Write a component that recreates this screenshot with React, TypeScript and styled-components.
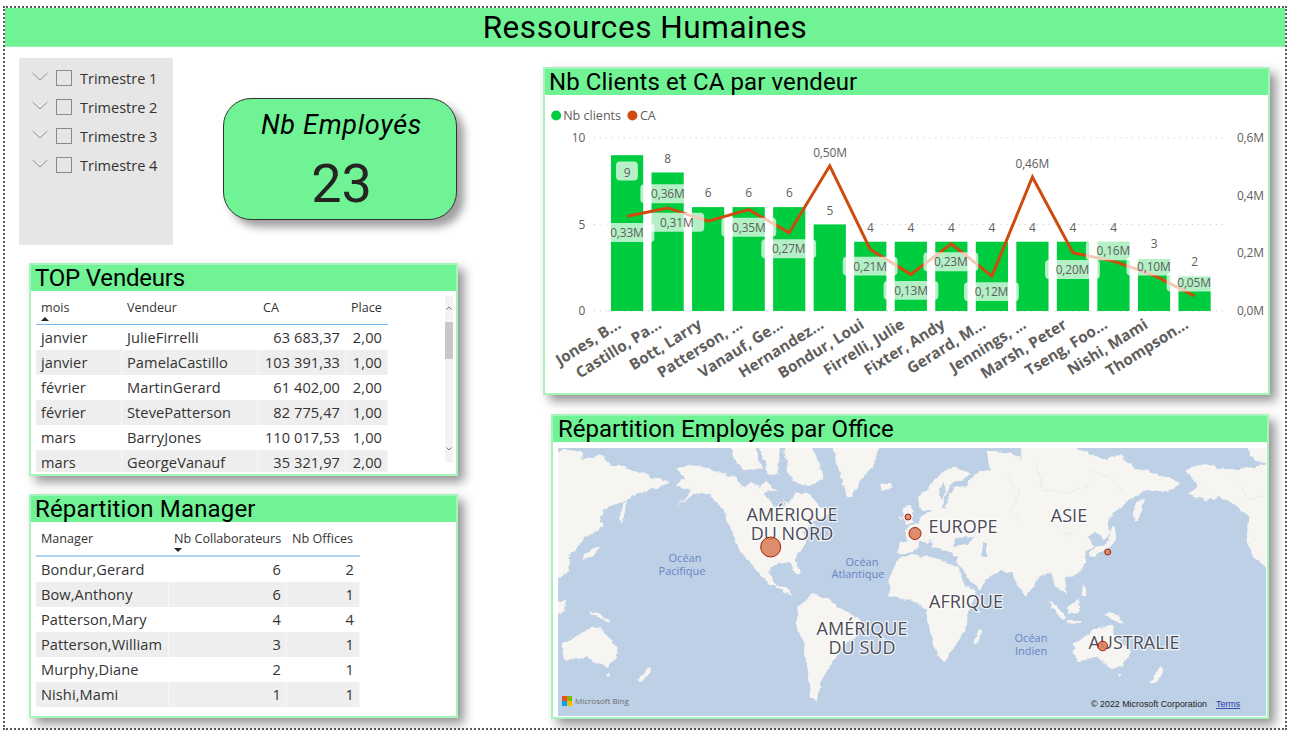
import React from "react";
import styled, { createGlobalStyle } from "styled-components";

const GREEN = "#6ff395";
const TITLE_FONT = `Roboto, "Noto Sans", sans-serif`;
const BODY_FONT = `"Open Sans", "Noto Sans", sans-serif`;

const Global = createGlobalStyle`
  html, body { margin: 0; padding: 0; background: #fff; overflow: hidden; }
  * { box-sizing: border-box; }
`;

const Frame = styled.div`
  margin: 6px 3px 0 3px;
  width: 1284px;
  height: 724px;
  border: 2px dotted #5a5a5a;
  background: #fff;
`;

const Banner = styled.header`
  height: 39px;
  background: ${GREEN};
  border-bottom: 1px solid #8df7ab;
  display: flex;
  align-items: center;
  justify-content: center;
  font: 400 31.5px ${TITLE_FONT};
  letter-spacing: 0.55px;
  color: #000;
`;

const Content = styled.main`
  display: flex;
`;

const LeftColumn = styled.section`
  width: 538px;
  flex: none;
  display: flex;
  flex-direction: column;
`;

const TopRow = styled.div`
  display: flex;
  align-items: flex-start;
  padding: 11px 0 0 14px;
`;

const Slicer = styled.div`
  width: 154px;
  height: 187px;
  background: #e6e6e6;
  padding: 6px 0 0 13px;
  display: flex;
  flex-direction: column;
`;

const SlicerRow = styled.label`
  height: 29px;
  display: flex;
  align-items: center;
  font: 400 14.5px ${BODY_FONT};
  color: #333;
`;

const Chevron = styled.svg`
  width: 16px;
  height: 9px;
  margin: -4px 8px 0 0;
  flex: none;
`;

const CheckBox = styled.span`
  width: 16px;
  height: 16px;
  border: 1px solid #8a8a8a;
  margin: -2px 8px 0 0;
  flex: none;
`;

const Kpi = styled.div`
  width: 234px;
  height: 122px;
  margin: 40px 0 0 50px;
  padding-left: 3px;
  background: ${GREEN};
  border: 1px solid #333;
  border-radius: 28px;
  box-shadow: 7px 7px 9px rgba(0, 0, 0, 0.38);
  display: flex;
  flex-direction: column;
  align-items: center;
`;

const KpiTitle = styled.div`
  font: italic 400 27px ${TITLE_FONT};
  letter-spacing: 0.7px;
  margin-top: 8px;
  line-height: 36px;
  color: #000;
`;

const KpiValue = styled.div`
  font: 400 54px ${TITLE_FONT};
  line-height: 64px;
  margin-top: 9px;
  color: #252423;
`;

const Card = styled.article<{ $w: number; $h: number; $mt: number; $ml: number }>`
  width: ${(p) => p.$w}px;
  height: ${(p) => p.$h}px;
  margin: ${(p) => p.$mt}px 0 0 ${(p) => p.$ml}px;
  border: 2px solid #a6f3bc;
  background: #fff;
  box-shadow: 6px 6px 10px rgba(0, 0, 0, 0.42);
  display: flex;
  flex-direction: column;
`;

const CardTitle = styled.h2<{ $pad: number; $track?: number }>`
  margin: 0;
  height: 26px;
  flex: none;
  background: ${GREEN};
  padding-left: ${(p) => p.$pad}px;
  font: 400 24px/26px ${TITLE_FONT};
  letter-spacing: ${(p) => p.$track ?? 0}px;
  color: #000;
  white-space: nowrap;
`;

const TableArea = styled.div`
  display: flex;
  justify-content: space-between;
  padding: 0 3px 0 5px;
`;

const Table = styled.div<{ $h: number }>`
  height: ${(p) => p.$h}px;
  overflow: hidden;
`;

const HeadRow = styled.div<{ $cols: string; $h: number; $rule: string; $rw: number }>`
  display: grid;
  grid-template-columns: ${(p) => p.$cols};
  height: ${(p) => p.$h}px;
  border-bottom: ${(p) => p.$rw}px solid ${(p) => p.$rule};
`;

const HeadCell = styled.div`
  padding: 9px 0 0 5px;
  font: 400 12.6px/16px ${BODY_FONT};
  color: #333;
  white-space: nowrap;
`;

const SortMark = styled.span<{ $up?: boolean }>`
  display: block;
  width: 0;
  height: 0;
  margin: 1px 0 0 0;
  border-left: 4px solid transparent;
  border-right: 4px solid transparent;
  ${(p) => (p.$up ? "border-bottom: 4px solid #252423;" : "border-top: 4px solid #252423;")}
`;

const Row = styled.div<{ $cols: string; $alt: boolean }>`
  display: grid;
  grid-template-columns: ${(p) => p.$cols};
  height: 25px;
  background: ${(p) => (p.$alt ? "#eeeeee" : "#fff")};
`;

const Cell = styled.div<{ $right?: boolean }>`
  padding: 0 5px;
  font: 400 14.6px/25px ${BODY_FONT};
  letter-spacing: 0.08px;
  color: #333;
  white-space: nowrap;
  text-align: ${(p) => (p.$right ? "right" : "left")};
  border-right: 1px solid rgba(255, 255, 255, 0.55);
`;

const Scrollbar = styled.div`
  width: 8px;
  height: 167px;
  margin-top: 5px;
  background: #f3f3f3;
  display: flex;
  flex-direction: column;
  align-items: center;
`;

const ScrollGlyph = styled.svg<{ $mt: number }>`
  width: 6px;
  height: 4px;
  margin-top: ${(p) => p.$mt}px;
  flex: none;
`;

const ScrollThumb = styled.div`
  width: 8px;
  height: 37px;
  margin-top: 12px;
  background: #c8c8c8;
  flex: none;
`;

const RightColumn = styled.section`
  display: flex;
  flex-direction: column;
  padding-top: 20px;
`;

const Drawing = styled.svg`
  display: block;
`;

const ChartText = styled.text`
  font: 400 12px ${BODY_FONT};
  letter-spacing: -0.15px;
  fill: #605e5c;
`;

const LegendText = styled.text`
  font: 400 12.6px ${BODY_FONT};
  fill: #605e5c;
`;

const AxisName = styled.text`
  font: 700 15.4px ${BODY_FONT};
  letter-spacing: 0;
  fill: #605e5c;
`;

const MapWrap = styled.div`
  padding: 6px 2px 1px 5px;
`;

const Continent = styled.text`
  font: 400 18px ${BODY_FONT};
  letter-spacing: 0;
  fill: #4c4c58;
  stroke: rgba(255, 255, 255, 0.75);
  stroke-width: 2.5px;
  paint-order: stroke;
  text-anchor: middle;
`;

const Ocean = styled.text`
  font: 400 11px ${BODY_FONT};
  fill: #6a84c9;
  text-anchor: middle;
`;

const Attribution = styled.text`
  font: 400 8.9px "Liberation Sans", Arial, sans-serif;
  fill: #222;
`;

const TermsLink = styled.text`
  font: 400 8.9px "Liberation Sans", Arial, sans-serif;
  fill: #2a3fa8;
  text-decoration: underline;
`;

const BingName = styled.text`
  font: 400 8px ${BODY_FONT};
  fill: #6e6e6e;
`;

const vendeurCols = "86px 136px 88px 42px";
const managerCols = "133px 118px 73px";

const vendeurs = [
  ["janvier", "JulieFirrelli", "63 683,37", "2,00"],
  ["janvier", "PamelaCastillo", "103 391,33", "1,00"],
  ["février", "MartinGerard", "61 402,00", "2,00"],
  ["février", "StevePatterson", "82 775,47", "1,00"],
  ["mars", "BarryJones", "110 017,53", "1,00"],
  ["mars", "GeorgeVanauf", "35 321,97", "2,00"],
];

const managers = [
  ["Bondur,Gerard", "6", "2"],
  ["Bow,Anthony", "6", "1"],
  ["Patterson,Mary", "4", "4"],
  ["Patterson,William", "3", "1"],
  ["Murphy,Diane", "2", "1"],
  ["Nishi,Mami", "1", "1"],
];

const barX = (i: number) => 610 + i * 40.67;
const BAR_W = 32.3;
const BASE = 311.7;

const sellers = [
  { name: "Jones, B...", n: 9, ny: 172.3, line: 216.7, ca: "0,33M", cx: 626, cy: 233, box: true },
  { name: "Castillo, Pa...", n: 8, ny: 158.7, line: 208.3, ca: "0,36M", cx: 667, cy: 194, box: true },
  { name: "Bott, Larry", n: 6, ny: 192.7, line: 221.7, ca: "0,31M", cx: 676, cy: 222.7, box: true },
  { name: "Patterson, ...", n: 6, ny: 192.7, line: 210, ca: "0,35M", cx: 748.3, cy: 227.7, box: true },
  { name: "Vanauf, Ge...", n: 6, ny: 192.7, line: 233.3, ca: "0,27M", cx: 788.3, cy: 249.3, box: true },
  { name: "Hernandez...", n: 5, ny: 210.7, line: 166, ca: "0,50M", cx: 829.7, cy: 153, box: false },
  { name: "Bondur, Loui", n: 4, ny: 228, line: 250, ca: "0,21M", cx: 870, cy: 266.7, box: true },
  { name: "Firrelli, Julie", n: 4, ny: 228, line: 275, ca: "0,13M", cx: 911, cy: 291, box: true },
  { name: "Fixter, Andy", n: 4, ny: 228, line: 244.3, ca: "0,23M", cx: 951, cy: 262.3, box: true },
  { name: "Gerard, M...", n: 4, ny: 228, line: 276.7, ca: "0,12M", cx: 991.7, cy: 292.3, box: true },
  { name: "Jennings, ...", n: 4, ny: 228, line: 177.3, ca: "0,46M", cx: 1032.7, cy: 163.7, box: false },
  { name: "Marsh, Peter", n: 4, ny: 228, line: 253.3, ca: "0,20M", cx: 1073, cy: 270, box: true },
  { name: "Tseng, Foo...", n: 4, ny: 228, line: 261.7, ca: "0,16M", cx: 1114, cy: 251.3, box: true },
  { name: "Nishi, Mami", n: 3, ny: 244.3, line: 276, ca: "0,10M", cx: 1154.7, cy: 266.7, box: true },
  { name: "Thompson...", n: 2, ny: 262.3, line: 296.7, ca: "0,05M", cx: 1195, cy: 282.7, box: true },
];

const rightAxis: [string, number][] = [
  ["0,6M", 138],
  ["0,4M", 196],
  ["0,2M", 254],
  ["0,0M", 311.7],
];

const ChartSvg = () => (
  <Drawing width={723} height={299} viewBox="545 95 723 299">
    <circle cx={555} cy={115.5} r={5} fill="#00cc3f" />
    <LegendText x={562} y={120}>Nb clients</LegendText>
    <circle cx={631.5} cy={115.5} r={5} fill="#cf4a0d" />
    <LegendText x={639} y={120}>CA</LegendText>

    {[138, 225, 311.7].map((y) => (
      <line key={y} x1={593} x2={1228} y1={y} y2={y} stroke="#c4c4c4" strokeWidth={1} strokeDasharray="1 5" />
    ))}
    <ChartText x={584} y={142} textAnchor="end">10</ChartText>
    <ChartText x={584} y={229} textAnchor="end">5</ChartText>
    <ChartText x={584} y={316} textAnchor="end">0</ChartText>
    {rightAxis.map(([t, y]) => (
      <ChartText key={t} x={1238} y={y + 4}>{t}</ChartText>
    ))}

    {sellers.map((s, i) => (
      <rect key={s.name} x={barX(i)} y={BASE - s.n * 17.37} width={BAR_W} height={s.n * 17.37} fill="#00cc3f" />
    ))}

    <polyline
      points={sellers.map((s, i) => `${barX(i) + BAR_W / 2},${s.line}`).join(" ")}
      fill="none"
      stroke="#cf4a0d"
      strokeWidth={3}
      strokeLinejoin="miter"
    />

    <rect x={615} y={161.7} width={22} height={19} rx={4} fill="#fff" fillOpacity={0.72} />
    {sellers.map((s) =>
      s.box ? <rect key={s.ca} x={s.cx - 27.5} y={s.cy - 9.5} width={55} height={19} rx={4} fill="#fff" fillOpacity={0.7} /> : null
    )}
    {sellers.map((s, i) => (
      <ChartText key={s.ca + "n"} x={barX(i) + BAR_W / 2} y={s.ny + 4.5} textAnchor="middle">{s.n}</ChartText>
    ))}
    {sellers.map((s) => (
      <ChartText key={s.ca + "t"} x={s.cx} y={s.cy + 4.5} textAnchor="middle">{s.ca}</ChartText>
    ))}

    {sellers.map((s, i) => {
      const x = barX(i) + 11;
      const y = 328;
      return (
        <AxisName key={s.name + "x"} x={x} y={y} textAnchor="end" transform={`rotate(-32 ${x} ${y})`}>
          {s.name}
        </AxisName>
      );
    })}
  </Drawing>
);

const LEFT_LAND = [
  "30,125 60,118 105,125 115,150 170,135 195,168 240,168 290,188 330,203 372,218 340,234 300,240 275,255 250,268 240,300 232,340 225,300 245,270 205,285 175,300 165,330 175,350 150,365 120,385 90,420 70,445 75,480 30,515",
  "145,415 165,410 150,435 110,450 125,430",
  "30,582 65,570 60,600 30,614",
  "130,605 165,610 195,635 170,630",
  "310,770 318,785 290,815 278,815",
  "180,792 195,792 190,802",
  "50,700 80,690 115,665 135,650 170,650 180,675 218,715 215,745 190,772 150,760 130,745 90,745 60,755 52,725",
  "395,180 430,165 480,170 530,190 575,200 590,230 625,215 645,232 665,215 695,240 730,285 745,255 790,250 822,285 852,300 835,325 800,335 790,350 775,365 785,395 770,420 750,445 765,490 755,490 735,460 700,455 680,470 672,495 695,530 720,530 750,560 725,548 670,520 630,480 595,440 570,395 555,340 530,295 490,255 450,245 415,275 390,300 420,265 440,240 395,225 420,205",
  "555,100 625,100 650,175 600,180 570,160",
  "640,100 705,112 700,195 670,190",
  "715,100 805,112 835,205 790,230 745,215 725,170",
  "860,100 1012,100 985,165 945,215 920,262 900,250 885,190",
  "1005,225 1040,218 1035,240 1010,243",
  "1078,290 1095,288 1110,335 1085,345 1075,320",
  "1060,322 1072,320 1070,335",
  "760,590 800,552 850,565 900,605 950,628 930,680 895,705 870,745 850,775 825,820 815,875 795,860 790,790 775,700 752,640",
];

const RIGHT_LAND = [
  "-35,400 -10,392 -15,360 20,340 40,315 70,300 110,295 120,250 135,225 170,230 190,195 240,180 230,125 300,130 330,145 345,100 390,100 470,100 545,135 590,150 630,135 670,172 740,192 812,215 775,245 720,240 690,250 660,270 610,310 590,335 605,370 580,385 555,365 535,385 555,410 530,420 520,470 490,500 465,500 470,550 440,535 425,490 395,495 345,560 320,520 305,490 270,480 250,490 205,540 165,490 145,465 140,440 100,420 70,415 60,380 55,400 30,395 10,430 -35,430",
  "25,265 60,225 95,190 130,170 180,190 165,210 130,215 115,240 95,300 60,300 35,300 25,280",
  "-65,510 -35,445 0,435 60,440 100,450 145,470 165,530 200,545 175,610 170,650 130,720 105,752 85,745 60,670 50,600 0,570 -60,555",
  "208,655 215,665 200,705 190,700",
  "692,268 705,270 680,335 670,320 675,285",
  "612,345 620,385 600,410 560,435 540,440 545,420 590,400",
  "415,575 430,580 470,625 455,630",
  "475,590 510,568 505,610 475,612",
  "580,610 610,605 640,635 610,630",
  "520,520 530,560 515,555",
  "470,632 520,636 515,642 472,640",
  "490,700 530,675 565,650 605,648 615,675 660,725 640,770 600,775 560,740 500,755",
  "622,792 635,792 630,802",
  "750,770 760,785 735,820 718,820",
  "830,180 880,160 930,175 985,180 1005,175 1090,160 1090,495 1040,450 1010,395 1015,320 970,280 930,265 885,270 835,255 860,225",
  "1005,100 1090,100 1090,165 1030,150",
];

const RIGHT_WATER = [
  "135,385 190,380 175,405 130,410",
  "215,395 230,400 232,440 218,440",
  "88,235 100,215 108,240 100,270 92,265",
];

const TRACES = [
  "M290 190 L330 250 L300 300 L340 340",
  "M380 160 L400 240 L470 250 L540 220",
  "M540 180 L600 200 L640 250",
  "M850 200 L900 250",
  "M420 330 L480 380 L520 340",
  "M970 200 L1020 270 L1060 260",
];

const bubbles: [number, number, number][] = [
  [770.7, 547, 10],
  [908, 517, 3],
  [915, 533.5, 6],
  [1107.7, 552, 3],
  [1102.7, 646, 4.8],
];

const MapSvg = () => (
  <Drawing width={708} height={268} viewBox="558 448 708 268">
    <defs>
      <filter id="coast" x="-5%" y="-5%" width="110%" height="110%" colorInterpolationFilters="sRGB">
        <feTurbulence type="fractalNoise" baseFrequency="0.12" numOctaves={3} seed={7} />
        <feDisplacementMap in="SourceGraphic" scale={6} xChannelSelector="R" yChannelSelector="G" />
      </filter>
    </defs>
    <rect x={558} y={448} width={708} height={268} fill="#bdd0e5" />
    <g filter="url(#coast)">
      <g transform="translate(545 410) scale(0.3333)" fill="#f7f5f2">
        {LEFT_LAND.map((p) => (
          <polygon key={p} points={p} />
        ))}
        <polygon points="662,245 705,240 722,285 692,292 672,272" fill="#bdd0e5" />
      </g>
      <g transform="translate(910 410) scale(0.3333)" fill="#f7f5f2">
        {RIGHT_LAND.map((p) => (
          <polygon key={p} points={p} />
        ))}
        {RIGHT_WATER.map((p) => (
          <polygon key={p} points={p} fill="#bdd0e5" />
        ))}
        {TRACES.map((d) => (
          <path key={d} d={d} fill="none" stroke="#dbe5ef" strokeWidth={2} />
        ))}
      </g>
    </g>

    <Continent x={792} y={521}>AMÉRIQUE</Continent>
    <Continent x={792} y={540}>DU NORD</Continent>
    <Continent x={862} y={635}>AMÉRIQUE</Continent>
    <Continent x={862} y={654}>DU SUD</Continent>
    <Continent x={963} y={533}>EUROPE</Continent>
    <Continent x={1069} y={522}>ASIE</Continent>
    <Continent x={966} y={608}>AFRIQUE</Continent>
    <Continent x={1134} y={649}>AUSTRALIE</Continent>

    <Ocean x={685} y={562}>Océan</Ocean>
    <Ocean x={682} y={575}>Pacifique</Ocean>
    <Ocean x={862} y={566}>Océan</Ocean>
    <Ocean x={858} y={578}>Atlantique</Ocean>
    <Ocean x={1031} y={642}>Océan</Ocean>
    <Ocean x={1031} y={655}>Indien</Ocean>

    {bubbles.map(([x, y, r]) => (
      <circle key={x} cx={x} cy={y} r={r} fill="#d9805a" fillOpacity={0.88} stroke="#a3200f" strokeWidth={1} />
    ))}

    <rect x={562} y={696} width={5} height={5} fill="#f25022" />
    <rect x={567} y={696} width={5} height={5} fill="#7fba00" />
    <rect x={562} y={701} width={5} height={5} fill="#00a4ef" />
    <rect x={567} y={701} width={5} height={5} fill="#ffb900" />
    <BingName x={575} y={704}>Microsoft Bing</BingName>
    <Attribution x={1091} y={707}>© 2022 Microsoft Corporation</Attribution>
    <TermsLink x={1216} y={707}>Terms</TermsLink>
  </Drawing>
);

export default function App() {
  return (
    <>
      <Global />
      <Frame>
        <Banner>Ressources Humaines</Banner>
        <Content>
          <LeftColumn>
            <TopRow>
              <Slicer>
                {[1, 2, 3, 4].map((n) => (
                  <SlicerRow key={n}>
                    <Chevron viewBox="0 0 16 9">
                      <polyline points="0.5,1 8,8 15.5,1" fill="none" stroke="#9c9289" strokeWidth={1} />
                    </Chevron>
                    <CheckBox />
                    Trimestre {n}
                  </SlicerRow>
                ))}
              </Slicer>
              <Kpi>
                <KpiTitle>Nb Employés</KpiTitle>
                <KpiValue>23</KpiValue>
              </Kpi>
            </TopRow>

            <Card $w={429} $h={213} $mt={18} $ml={24}>
              <CardTitle $pad={4} $track={-0.2}>TOP Vendeurs</CardTitle>
              <TableArea>
                <Table $h={181}>
                  <HeadRow $cols={vendeurCols} $h={34} $rule="#76b5ee" $rw={1}>
                    <HeadCell>
                      mois
                      <SortMark $up />
                    </HeadCell>
                    <HeadCell>Vendeur</HeadCell>
                    <HeadCell>CA</HeadCell>
                    <HeadCell>Place</HeadCell>
                  </HeadRow>
                  {vendeurs.map((r, i) => (
                    <Row key={r[1]} $cols={vendeurCols} $alt={i % 2 === 1}>
                      <Cell>{r[0]}</Cell>
                      <Cell>{r[1]}</Cell>
                      <Cell $right>{r[2]}</Cell>
                      <Cell $right>{r[3]}</Cell>
                    </Row>
                  ))}
                </Table>
                <Scrollbar>
                  <ScrollGlyph $mt={10} viewBox="0 0 6 4">
                    <polyline points="0.5,3.5 3,1 5.5,3.5" fill="none" stroke="#777" strokeWidth={1} />
                  </ScrollGlyph>
                  <ScrollThumb />
                  <ScrollGlyph $mt={88} viewBox="0 0 6 4">
                    <polyline points="0.5,0.5 3,3 5.5,0.5" fill="none" stroke="#777" strokeWidth={1} />
                  </ScrollGlyph>
                </Scrollbar>
              </TableArea>
            </Card>

            <Card $w={429} $h={224} $mt={18} $ml={24}>
              <CardTitle $pad={4} $track={0.15}>Répartition Manager</CardTitle>
              <TableArea>
                <Table $h={190}>
                  <HeadRow $cols={managerCols} $h={35} $rule="#afd5f5" $rw={2}>
                    <HeadCell>Manager</HeadCell>
                    <HeadCell>
                      Nb Collaborateurs
                      <SortMark />
                    </HeadCell>
                    <HeadCell>Nb Offices</HeadCell>
                  </HeadRow>
                  {managers.map((r, i) => (
                    <Row key={r[0]} $cols={managerCols} $alt={i % 2 === 1}>
                      <Cell>{r[0]}</Cell>
                      <Cell $right>{r[1]}</Cell>
                      <Cell $right>{r[2]}</Cell>
                    </Row>
                  ))}
                </Table>
              </TableArea>
            </Card>
          </LeftColumn>

          <RightColumn>
            <Card $w={727} $h={328} $mt={0} $ml={0}>
              <CardTitle $pad={4} $track={0.1}>Nb Clients et CA par vendeur</CardTitle>
              <ChartSvg />
            </Card>
            <Card $w={718} $h={305} $mt={19} $ml={8}>
              <CardTitle $pad={5}>Répartition Employés par Office</CardTitle>
              <MapWrap>
                <MapSvg />
              </MapWrap>
            </Card>
          </RightColumn>
        </Content>
      </Frame>
    </>
  );
}
